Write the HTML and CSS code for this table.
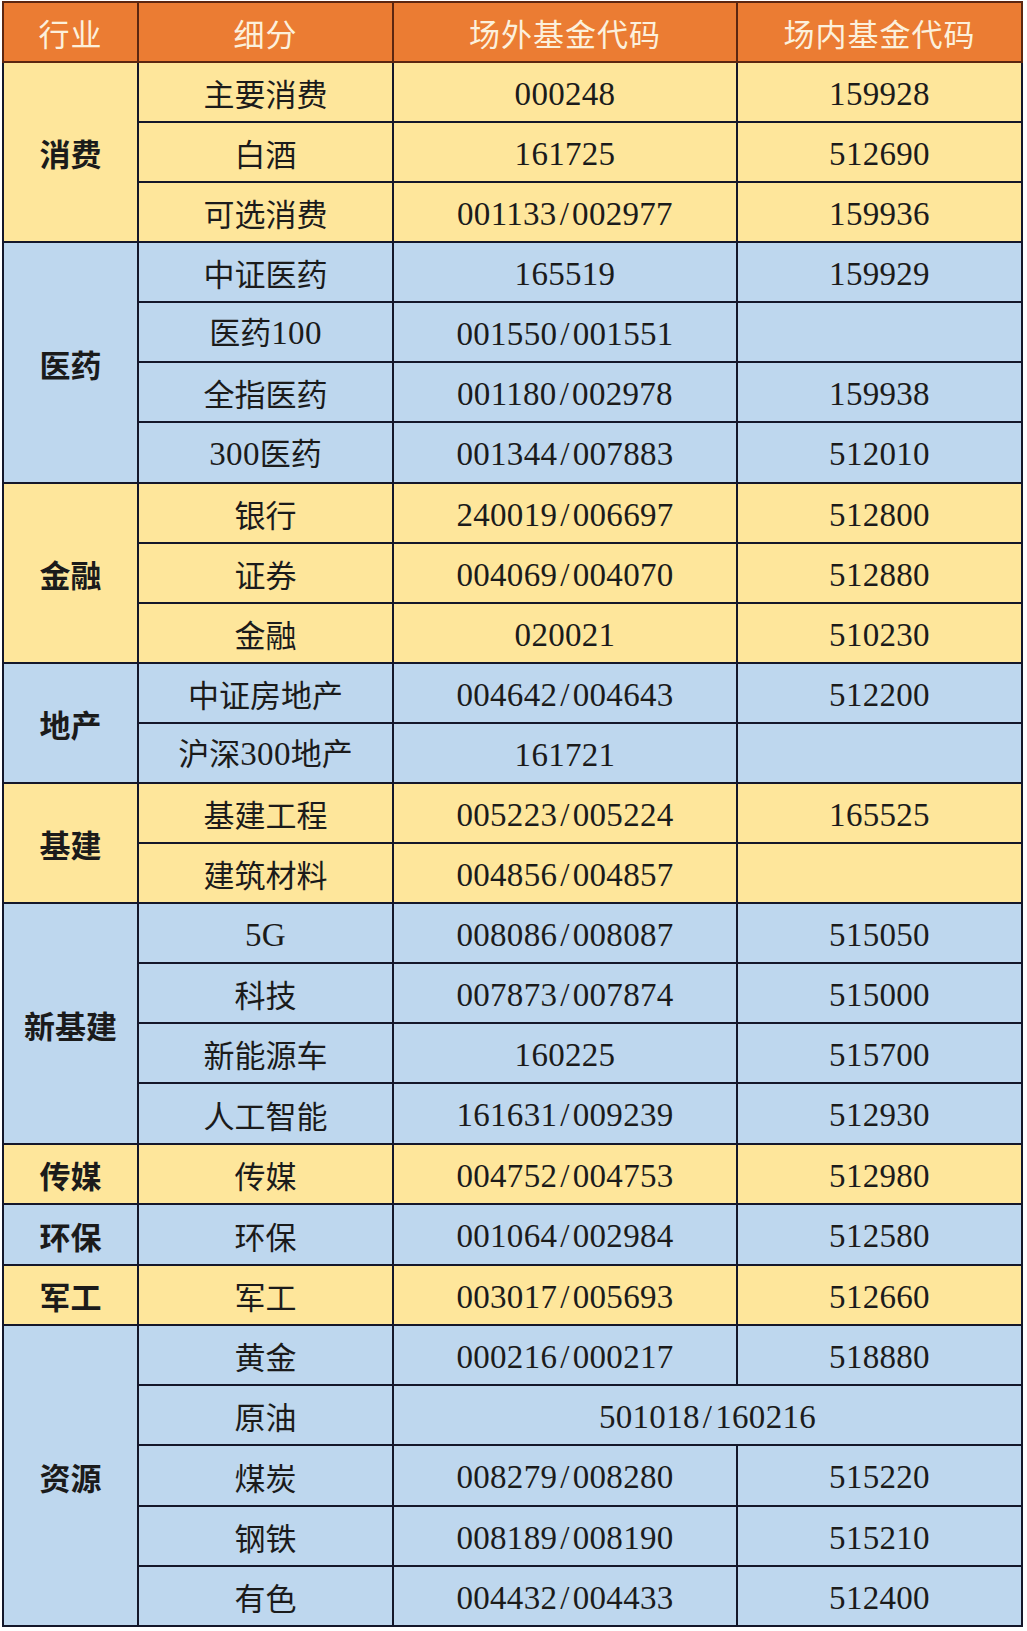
FILE: index.html
```html
<!DOCTYPE html>
<html lang="zh">
<head>
<meta charset="utf-8">
<link rel="stylesheet" href="styles.css">
</head>
<body>
<div class="wrap">
<table class="funds">
<colgroup><col class="c1"><col class="c2"><col class="c3"><col class="c4"></colgroup>
<thead>
<tr><th>行业</th><th>细分</th><th>场外基金代码</th><th>场内基金代码</th></tr>
</thead>
<tbody>
<tr class="y"><td class="cat" rowspan="3">消费</td><td>主要消费</td><td class="n">000248</td><td class="n">159928</td></tr>
<tr class="y"><td>白酒</td><td class="n">161725</td><td class="n">512690</td></tr>
<tr class="y"><td>可选消费</td><td class="n">001133<span class="sl">/</span>002977</td><td class="n">159936</td></tr>
<tr class="b"><td class="cat" rowspan="4">医药</td><td>中证医药</td><td class="n">165519</td><td class="n">159929</td></tr>
<tr class="b"><td>医药<span class="d">100</span></td><td class="n">001550<span class="sl">/</span>001551</td><td></td></tr>
<tr class="b"><td>全指医药</td><td class="n">001180<span class="sl">/</span>002978</td><td class="n">159938</td></tr>
<tr class="b tall"><td><span class="d">300</span>医药</td><td class="n">001344<span class="sl">/</span>007883</td><td class="n">512010</td></tr>
<tr class="y"><td class="cat" rowspan="3">金融</td><td>银行</td><td class="n">240019<span class="sl">/</span>006697</td><td class="n">512800</td></tr>
<tr class="y"><td>证券</td><td class="n">004069<span class="sl">/</span>004070</td><td class="n">512880</td></tr>
<tr class="y"><td>金融</td><td class="n">020021</td><td class="n">510230</td></tr>
<tr class="b"><td class="cat" rowspan="2">地产</td><td>中证房地产</td><td class="n">004642<span class="sl">/</span>004643</td><td class="n">512200</td></tr>
<tr class="b"><td>沪深<span class="d">300</span>地产</td><td class="n">161721</td><td></td></tr>
<tr class="y"><td class="cat" rowspan="2">基建</td><td>基建工程</td><td class="n">005223<span class="sl">/</span>005224</td><td class="n">165525</td></tr>
<tr class="y"><td>建筑材料</td><td class="n">004856<span class="sl">/</span>004857</td><td></td></tr>
<tr class="b"><td class="cat" rowspan="4">新基建</td><td class="n">5G</td><td class="n">008086<span class="sl">/</span>008087</td><td class="n">515050</td></tr>
<tr class="b"><td>科技</td><td class="n">007873<span class="sl">/</span>007874</td><td class="n">515000</td></tr>
<tr class="b"><td>新能源车</td><td class="n">160225</td><td class="n">515700</td></tr>
<tr class="b tall"><td>人工智能</td><td class="n">161631<span class="sl">/</span>009239</td><td class="n">512930</td></tr>
<tr class="y"><td class="cat">传媒</td><td>传媒</td><td class="n">004752<span class="sl">/</span>004753</td><td class="n">512980</td></tr>
<tr class="b tall"><td class="cat">环保</td><td>环保</td><td class="n">001064<span class="sl">/</span>002984</td><td class="n">512580</td></tr>
<tr class="y"><td class="cat">军工</td><td>军工</td><td class="n">003017<span class="sl">/</span>005693</td><td class="n">512660</td></tr>
<tr class="b"><td class="cat" rowspan="5">资源</td><td>黄金</td><td class="n">000216<span class="sl">/</span>000217</td><td class="n">518880</td></tr>
<tr class="b"><td>原油</td><td class="n" colspan="2">501018<span class="sl">/</span>160216</td></tr>
<tr class="b tall"><td>煤炭</td><td class="n">008279<span class="sl">/</span>008280</td><td class="n">515220</td></tr>
<tr class="b"><td>钢铁</td><td class="n">008189<span class="sl">/</span>008190</td><td class="n">515210</td></tr>
<tr class="b"><td>有色</td><td class="n">004432<span class="sl">/</span>004433</td><td class="n">512400</td></tr>
</tbody>
</table>
</div>
</body>
</html>
```

FILE: styles.css
```css
html, body {
  margin: 0;
  padding: 0;
  background: #ffffff;
}
.wrap {
  padding: 1px 0 0 2px;
}
.funds {
  border-collapse: collapse;
  table-layout: fixed;
  width: 1019px;
  font-family: "Noto Sans CJK SC", sans-serif;
  font-size: 31px;
  color: #1b1b1b;
}
.c1 { width: 135px; }
.c2 { width: 255px; }
.c3 { width: 344px; }
.c4 { width: 285px; }
.funds th, .funds td {
  border: 2px solid #14172a;
  text-align: center;
  vertical-align: middle;
  padding: 0;
  line-height: 1;
  white-space: nowrap;
}
.funds th {
  height: 58px;
  background: #eb7c33;
  color: #fcf0dc;
  font-weight: 400;
  border-color: #5c2610;
  letter-spacing: 1px;
}
.funds td {
  height: 57px;
  padding-top: 1px;
}
.funds .tall td {
  height: 58px;
}
.funds td.n {
  height: 54px;
  padding-top: 4px;
}
.funds .tall td.n {
  height: 55px;
}
.y td { background: #fee69b; }
.b td { background: #bed7ee; }
.n, .d {
  font-family: "Liberation Serif", serif;
  font-size: 33px;
  letter-spacing: 0.3px;
}
.sl {
  margin: 0 3px;
}
.funds td.cat {
  font-weight: 700;
}
```
